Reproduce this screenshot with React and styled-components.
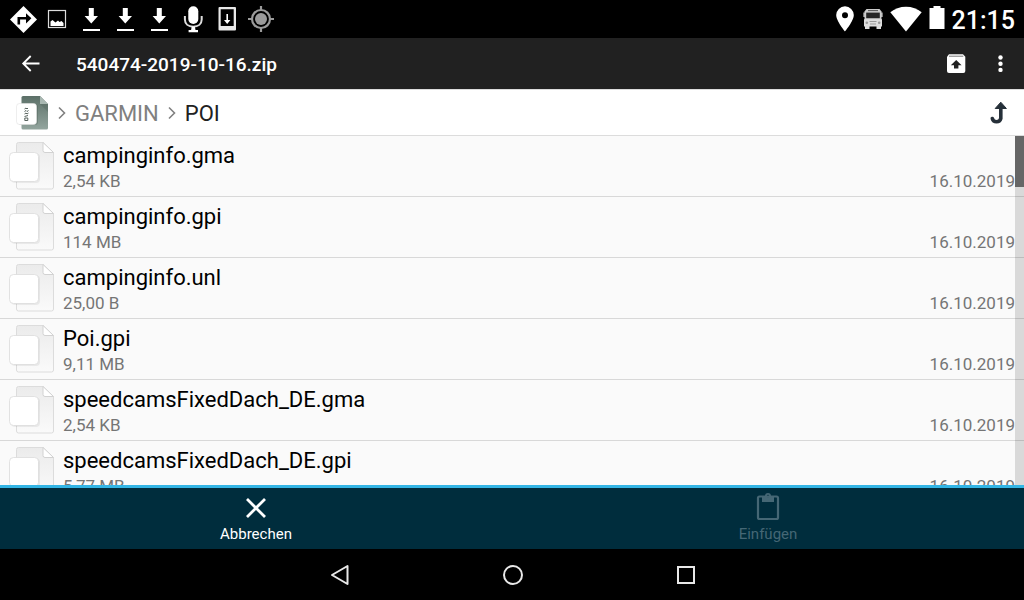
import styled, { createGlobalStyle } from 'styled-components';

const GlobalStyle = createGlobalStyle`
  * {
    box-sizing: border-box;
  }

  body {
    margin: 0;
    background: #000;
    font-family: Roboto, 'Liberation Sans', sans-serif;
  }

  button {
    border: 0;
    padding: 0;
    background: none;
    color: inherit;
    font: inherit;
  }

  svg {
    display: block;
    flex: none;
  }
`;

const Screen = styled.div`
  display: flex;
  flex-direction: column;
  height: 100vh;
  overflow: hidden;
`;

const StatusBar = styled.div`
  display: flex;
  flex: none;
  align-items: center;
  justify-content: space-between;
  height: 38px;
  padding: 0 9px;
  background: #000;
  color: #fff;
`;

const StatusGroup = styled.div`
  display: flex;
  align-items: center;
  gap: ${props => props.$gap};
`;

const Clock = styled.time`
  padding-top: 4px;
  font-size: 25px;
  font-weight: 500;
  line-height: 34px;
`;

const Toolbar = styled.header`
  display: flex;
  flex: none;
  align-items: center;
  height: 51px;
  padding: 0 9px 0 15px;
  background: #212121;
  color: #fff;
`;

const Title = styled.h1`
  flex: 1;
  margin: 0;
  padding: 2px 0 0 31px;
  font-size: 19px;
  font-weight: 500;
  line-height: 24px;
`;

const IconButton = styled.button`
  display: flex;
  align-items: center;
  justify-content: center;
  width: ${props => props.$width || '30px'};
  height: 40px;
`;

const PathBar = styled.nav`
  display: flex;
  flex: none;
  align-items: center;
  height: 47px;
  padding: 0 10px 0 16px;
  border-top: 1px solid #dcdcdc;
  border-bottom: 1px solid #dcdcdc;
  background: #fff;
  color: #263039;
`;

const Crumbs = styled.ol`
  display: flex;
  flex: 1;
  align-items: center;
  gap: 9px;
  margin: 0;
  padding: 0;
  list-style: none;

  li {
    display: flex;
    align-items: center;
    gap: 9px;
  }
`;

const Crumb = styled.a`
  padding-top: 2px;
  color: ${props => (props.$current ? '#212121' : '#808080')};
  font-size: 22px;
  line-height: 28px;
  text-decoration: none;
`;

const HomeCrumb = styled.a`
  display: flex;
`;

const FileArea = styled.main`
  position: relative;
  flex: 1;
  min-height: 0;
  overflow: hidden;
  background: #fafafa;
`;

const FileList = styled.ul`
  margin: 0;
  padding: 0;
  list-style: none;
`;

const FileRow = styled.li`
  display: flex;
  align-items: flex-start;
  gap: 8px;
  height: 61px;
  padding: 5px 9px 0 8px;
  border-bottom: 1px solid #d8d8d8;
`;

const FileText = styled.div`
  flex: 1;
  padding-top: 1px;
`;

const FileName = styled.div`
  color: #000;
  font-size: 22px;
  line-height: 28px;
`;

const FileMeta = styled.div`
  display: flex;
  justify-content: space-between;
  color: #757575;
  font-size: 17px;
  line-height: 22px;
`;

const ScrollTrack = styled.div`
  position: absolute;
  top: 0;
  right: 0;
  bottom: 0;
  width: 9px;
  background: rgba(0, 0, 0, 0.13);
`;

const ScrollThumb = styled.div`
  height: 51px;
  background: #666;
`;

const ActionBar = styled.footer`
  display: grid;
  flex: none;
  grid-template-columns: 1fr 1fr;
  height: 64px;
  border-top: 3px solid #33b5e5;
  background: #002d3d;
`;

const ActionButton = styled.button`
  display: flex;
  flex-direction: column;
  align-items: center;
  padding-top: 4px;
  color: #fff;
  font-size: 15px;
  line-height: 20px;

  &:disabled {
    color: #456775;
  }
`;

const SystemNav = styled.nav`
  display: flex;
  flex: none;
  align-items: center;
  justify-content: center;
  height: 51px;
  padding-left: 2px;
  background: #000;
  color: #e8e8e8;
`;

const files = [
  { name: 'campinginfo.gma', size: '2,54 KB', date: '16.10.2019' },
  { name: 'campinginfo.gpi', size: '114 MB', date: '16.10.2019' },
  { name: 'campinginfo.unl', size: '25,00 B', date: '16.10.2019' },
  { name: 'Poi.gpi', size: '9,11 MB', date: '16.10.2019' },
  { name: 'speedcamsFixedDach_DE.gma', size: '2,54 KB', date: '16.10.2019' },
  { name: 'speedcamsFixedDach_DE.gpi', size: '5,77 MB', date: '16.10.2019' },
];

const Icon = ({ w = 28, h = 28, children }) => (
  <svg width={w} height={h} viewBox={`0 0 ${w} ${h}`} fill='currentColor' aria-hidden='true'>
    {children}
  </svg>
);

const DirectionsIcon = () => (
  <Icon>
    <path d='M14.5 1 28 14.5 14.5 28 1 14.5Z' />
    <path d='M9.8 19.5v-6.200h10' fill='none' stroke='#000' strokeWidth='2.6' />
    <path d='M17 8.200l5.400 5.100-5.400 5.100Z' fill='#000' />
  </Icon>
);

const PictureIcon = () => (
  <Icon>
    <rect x='5.500' y='5.500' width='17' height='17' fill='none' stroke='#ddd' strokeWidth='1.2' />
    <path d='M7.500 21v-4.500l2-1.500 3 2.500 2.500-2 1.500 1.500 2-1 2 2v3Z' />
  </Icon>
);

const DownloadIcon = () => (
  <Icon>
    <path d='M11.800 3h5v8h4.200l-6.700 7.600L7.600 11h4.200ZM6 24h17v2H6Z' />
  </Icon>
);

const MicIcon = () => (
  <Icon>
    <rect x='9.300' y='1.300' width='10' height='17.700' rx='5' />
    <path d='M5.900 11v3.500c0 4.500 3.600 7.200 8.400 7.200s8.400-2.700 8.400-7.200V11' fill='none' stroke='#ddd' strokeWidth='2' />
    <path d='M12.700 21.500h3.200l.6 3.500h2.500v2.200H9.600V25h2.500Z' />
  </Icon>
);

const PhoneDownloadIcon = () => (
  <Icon>
    <path fillRule='evenodd' d='M6.500 2h15.500a1 1 0 0 1 1 1v21.500a1 1 0 0 1-1 1H6.500a1 1 0 0 1-1-1V3a1 1 0 0 1 1-1ZM7.700 4.200v16.800h13V4.200Z' fill='#e8e8e8' />
    <path d='M13.400 9h1.600v6h2.400l-3.200 4-3.200-4h2.400Z' />
  </Icon>
);

const GpsIcon = () => (
  <Icon>
    <g stroke='#9b9b9b' strokeWidth='2.200' fill='none'>
      <circle cx='14' cy='14' r='9' />
      <path d='M14 1v4.500M14 22.500V27M1 14h4.500M22.500 14H27' />
    </g>
    <circle cx='14' cy='14' r='6' fill='#9b9b9b' />
  </Icon>
);

const PinIcon = () => (
  <Icon w={20} h={28}>
    <path fillRule='evenodd' d='M9 1.300a8.800 8.800 0 0 1 8.800 8.800c0 6-8.800 16.400-8.800 16.400S.2 16.100.2 10.100A8.800 8.800 0 0 1 9 1.300Zm0 5.900a3 3 0 1 0 0 6 3 3 0 0 0 0-6Z' />
  </Icon>
);

const BusIcon = () => (
  <Icon w={20} h={28}>
    <path d='M3.500 4h13l2 2.500V15H1.500V6.500Z' fill='#ccc' />
    <path d='M.4 7.500h1.500V12H.4ZM18.100 7.500h1.500V12h-1.500Z' fill='#ccc' />
    <path d='M5 5.600h10' stroke='#555' strokeWidth='1' />
    <path d='M3.200 7.600h13.600v5.600H3.200Z' fill='#262626' />
    <path d='M1 14.200h18v7.300H1ZM2 21h4.500v3H2ZM13.500 21H18v3h-4.500Z' fill='#dedede' />
    <path d='M6.500 16.500h7M7 19h6' stroke='#999' strokeWidth='1' />
    <circle cx='3.800' cy='17.800' r='1.300' fill='#999' />
    <circle cx='16.200' cy='17.800' r='1.300' fill='#999' />
  </Icon>
);

const WifiIcon = () => (
  <Icon w={32} h={28}>
    <path d='M16 26.600 .3 7.300C4.500 3.700 10 1.700 16 1.700s11.500 2 15.700 5.600Z' />
  </Icon>
);

const BatteryIcon = () => (
  <Icon w={16} h={28}>
    <path d='M4.500 1h7v2H15.500v21H.5V3h4Z' />
  </Icon>
);

const BackIcon = () => (
  <Icon>
    <path d='M23.500 13.500H7.500M14.700 6l-7.500 7.500 7.500 7.500' fill='none' stroke='currentColor' strokeWidth='1.800' />
  </Icon>
);

const ExtractIcon = () => (
  <Icon>
    <path d='M7 4.300h14l2.300 2.500V21a2 2 0 0 1-2 2H7a2 2 0 0 1-2-2V6.800Z' />
    <path d='M7 6.200h14.300' stroke='#777' strokeWidth='1' />
    <path d='M14.200 10l5.400 5.200h-3.200v3.300h-4.400v-3.300H8.800Z' fill='#212121' />
  </Icon>
);

const MoreIcon = () => (
  <Icon>
    <circle cx='14.500' cy='7.500' r='2.200' />
    <circle cx='14.500' cy='13.700' r='2.200' />
    <circle cx='14.500' cy='19.900' r='2.200' />
  </Icon>
);

const ChevronIcon = () => (
  <Icon w={8} h={14}>
    <path d='M1 1.500 6.500 7 1 12.500' fill='none' stroke='#808080' strokeWidth='1.600' />
  </Icon>
);

const UpIcon = () => (
  <Icon>
    <path d='M15.800 9v10.500a4.400 4.400 0 0 1-8.500 0' fill='none' stroke='currentColor' strokeWidth='3.600' strokeLinecap='round' />
    <path d='M15.800 3.200l5.600 6.300H10.200Z' stroke='currentColor' strokeLinejoin='round' />
  </Icon>
);

const ZipIcon = () => (
  <Icon w={33} h={36}>
    <defs>
      <linearGradient id='zip-page' x1='0' y1='0' x2='0' y2='1'>
        <stop offset='0' stopColor='#5c7068' />
        <stop offset='1' stopColor='#93a59e' />
      </linearGradient>
    </defs>
    <path d='M7 1h17l8 8v24a1.500 1.500 0 0 1-1.500 1.500H7A1.500 1.500 0 0 1 5.500 33V2.500A1.500 1.500 0 0 1 7 1Z' fill='url(#zip-page)' />
    <path d='M24 1l8 8h-8Z' fill='#a9b8b2' />
    <path d='M24 9h8v8Z' fill='#4f635b' opacity='.35' />
    <rect x='2' y='9' width='20' height='21' rx='3' fill='#40524a' opacity='.3' />
    <rect x='.5' y='8.500' width='20' height='21' rx='3' fill='#fff' stroke='#e2e2e2' strokeWidth='.6' />
    <path d='M8.500 14l1.500-1 1 1 1-1M8.500 16.500l1.500-1 1 1 1.500-1M8.500 19l1.500-1 1 1 1.500-1M8.500 21.500l3.500-1M8.800 23v2.500h3V23Z' fill='none' stroke='#54605b' strokeWidth='1' />
  </Icon>
);

const FileIcon = () => (
  <Icon w={47} h={50}>
    <path d='M10.500 1.500H35l10.500 10V46a2 2 0 0 1-2 2H10.500a2 2 0 0 1-2-2V3.500a2 2 0 0 1 2-2Z' fill='url(#file-page)' stroke='#dcdcdc' />
    <path d='M35 1.500v8a2 2 0 0 0 2 2h8.500Z' fill='#fff' stroke='#d2d2d2' />
    <rect x='3' y='12.500' width='29' height='29.500' rx='4' fill='#000' opacity='.06' />
    <rect x='1.500' y='11.500' width='29' height='29' rx='4' fill='#fff' stroke='#dadada' strokeWidth='.8' />
  </Icon>
);

const GradientDefs = () => (
  <svg width='0' height='0' aria-hidden='true'>
    <defs>
      <linearGradient id='file-page' x1='0' y1='0' x2='0' y2='1'>
        <stop offset='0' stopColor='#ebebeb' />
        <stop offset='1' stopColor='#fafafa' />
      </linearGradient>
    </defs>
  </svg>
);

const CancelIcon = () => (
  <Icon w={32} h={32}>
    <path d='M7 7l18 18M25 7 7 25' fill='none' stroke='currentColor' strokeWidth='2.800' />
  </Icon>
);

const PasteIcon = () => (
  <Icon w={32} h={32}>
    <rect x='6' y='4.500' width='20' height='22.500' rx='1.500' fill='none' stroke='currentColor' strokeWidth='2.200' />
    <path fillRule='evenodd' d='M10 4h3a3 3 0 0 1 6 0h3v6H10Zm6-1.200a1.200 1.200 0 1 0 0 2.400 1.200 1.200 0 0 0 0-2.400Z' />
  </Icon>
);

const App = () => {
  return (
    <Screen>
      <GlobalStyle />
      <StatusBar>
        <StatusGroup $gap='6px'>
          <DirectionsIcon />
          <PictureIcon />
          <DownloadIcon />
          <DownloadIcon />
          <DownloadIcon />
          <MicIcon />
          <PhoneDownloadIcon />
          <GpsIcon />
        </StatusGroup>
        <StatusGroup $gap='7px'>
          <PinIcon />
          <BusIcon />
          <WifiIcon />
          <BatteryIcon />
          <Clock>21:15</Clock>
        </StatusGroup>
      </StatusBar>
      <Toolbar>
        <IconButton aria-label='Zurück'>
          <BackIcon />
        </IconButton>
        <Title>540474-2019-10-16.zip</Title>
        <IconButton $width='58px' aria-label='Entpacken'>
          <ExtractIcon />
        </IconButton>
        <IconButton aria-label='Mehr'>
          <MoreIcon />
        </IconButton>
      </Toolbar>
      <PathBar>
        <Crumbs>
          <li>
            <HomeCrumb href='#root' aria-label='Archiv'>
              <ZipIcon />
            </HomeCrumb>
          </li>
          <li>
            <ChevronIcon />
            <Crumb href='#garmin'>GARMIN</Crumb>
          </li>
          <li>
            <ChevronIcon />
            <Crumb href='#poi' $current>
              POI
            </Crumb>
          </li>
        </Crumbs>
        <IconButton aria-label='Nach oben'>
          <UpIcon />
        </IconButton>
      </PathBar>
      <FileArea>
        <GradientDefs />
        <FileList>
          {files.map(({ name, size, date }) => (
            <FileRow key={name}>
              <FileIcon />
              <FileText>
                <FileName>{name}</FileName>
                <FileMeta>
                  <span>{size}</span>
                  <span>{date}</span>
                </FileMeta>
              </FileText>
            </FileRow>
          ))}
        </FileList>
        <ScrollTrack>
          <ScrollThumb />
        </ScrollTrack>
      </FileArea>
      <ActionBar>
        <ActionButton>
          <CancelIcon />
          Abbrechen
        </ActionButton>
        <ActionButton disabled>
          <PasteIcon />
          Einfügen
        </ActionButton>
      </ActionBar>
      <SystemNav>
        <IconButton $width='173px' aria-label='Zurück'>
          <Icon>
            <path d='M21.500 5v18L6 14Z' fill='none' stroke='currentColor' strokeWidth='2' strokeLinejoin='round' />
          </Icon>
        </IconButton>
        <IconButton $width='173px' aria-label='Startseite'>
          <Icon>
            <circle cx='14' cy='14' r='9' fill='none' stroke='currentColor' strokeWidth='2' />
          </Icon>
        </IconButton>
        <IconButton $width='173px' aria-label='Übersicht'>
          <Icon>
            <rect x='6' y='6' width='16' height='16' fill='none' stroke='currentColor' strokeWidth='2' />
          </Icon>
        </IconButton>
      </SystemNav>
    </Screen>
  );
};

export default App;
